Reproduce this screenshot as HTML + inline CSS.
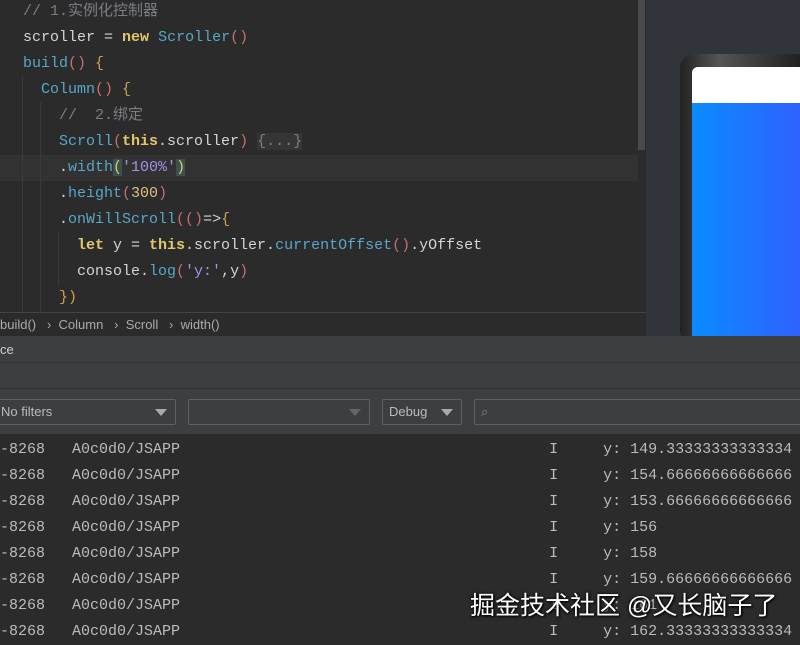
<!DOCTYPE html>
<html><head><meta charset="utf-8"><style>
*{margin:0;padding:0;box-sizing:border-box}
body{width:800px;height:642px;overflow:hidden;background:#2b2b2b;position:relative;font-family:"Liberation Mono","Noto Sans CJK SC",monospace;}
.a{position:absolute}
.code{left:0;top:0;width:646px;height:312px;background:#2b2b2b}
.ln{position:absolute;left:0;height:26px;line-height:26px;font-size:15px;white-space:pre;color:#d4d4d4}
.cm{color:#7a7e85}.kw{color:#e2c66e;font-weight:bold}.fn{color:#56a8c8}.br{color:#d0a050}.pr{color:#c86e6e}.st{color:#a98ee8}.nu{color:#e0c080}.m{color:#56a8c8}
.ui{font-family:"Liberation Sans","Noto Sans CJK SC",sans-serif}
.log{position:absolute;left:0;height:26px;line-height:26px;font-size:15px;white-space:pre;color:#bbbbbb;width:800px}
.sel{position:absolute;top:399px;height:26px;border:1px solid #5e6163;border-radius:2px;background:#3c3f41;color:#bbb;font-size:13px;line-height:24px}
.tri{position:absolute;right:8px;top:9px;width:0;height:0;border-left:6px solid transparent;border-right:6px solid transparent;border-top:7px solid #aaa}
</style></head><body>
<div class="a code"></div>
<div class="a" style="left:0;top:155px;width:638px;height:26px;background:#323232"></div>
<div class="a" style="left:638px;top:0;width:7px;height:150px;background:#4a4a4a"></div>
<div class="a" style="left:22px;top:76px;width:1px;height:236px;background:#3a3a3a"></div>
<div class="a" style="left:40px;top:102px;width:1px;height:210px;background:#3a3a3a"></div>
<div class="a" style="left:58px;top:232px;width:1px;height:54px;background:#3a3a3a"></div>
<div class="ln" style="top:-1px;left:23px"><span class="cm">// 1.实例化控制器</span></div>
<div class="ln" style="top:25px;left:23px">scroller = <span class="kw">new</span> <span class="fn">Scroller</span><span class="pr">()</span></div>
<div class="ln" style="top:51px;left:23px"><span class="fn">build</span><span class="pr">()</span> <span class="br">{</span></div>
<div class="ln" style="top:77px;left:41px"><span class="fn">Column</span><span class="pr">()</span> <span class="br">{</span></div>
<div class="ln" style="top:103px;left:59px"><span class="cm">//  2.绑定</span></div>
<div class="ln" style="top:129px;left:59px"><span class="fn">Scroll</span><span class="pr">(</span><span class="kw">this</span>.scroller<span class="pr">)</span> <span style="color:#7a7e85;background:#353535">{...}</span></div>
<div class="ln" style="top:155px;left:59px">.<span class="m">width</span><span style="background:#3b514d;color:#e2c66e">(</span><span class="st">'100%'</span><span style="background:#3b514d;color:#e2c66e">)</span></div>
<div class="ln" style="top:181px;left:59px">.<span class="m">height</span><span class="pr">(</span><span class="nu">300</span><span class="pr">)</span></div>
<div class="ln" style="top:207px;left:59px">.<span class="m">onWillScroll</span><span class="pr">(()</span>=&gt;<span class="br">{</span></div>
<div class="ln" style="top:233px;left:77px"><span class="kw">let</span> y = <span class="kw">this</span>.scroller.<span class="m">currentOffset</span><span class="pr">()</span>.yOffset</div>
<div class="ln" style="top:259px;left:77px">console.<span class="m">log</span><span class="pr">(</span><span class="st">'y:'</span>,y<span class="pr">)</span></div>
<div class="ln" style="top:285px;left:59px"><span class="br">})</span></div>
<div class="a ui" style="left:0;top:312px;width:646px;height:25px;background:#2b2b2b;border-top:1px solid #444;font-size:13px;color:#aaa;line-height:24px;white-space:pre">build()   ›  Column   ›  Scroll   ›  width()</div>
<div class="a" style="left:646px;top:0;width:154px;height:336px;background:#31343a"></div>
<div class="a" style="left:680px;top:54px;width:130px;height:290px;border-radius:14px;background:linear-gradient(90deg,#222,#555 30%,#1a1a1a)"></div>
<div class="a" style="left:692px;top:67px;width:110px;height:280px;border-radius:6px 0 0 0;background:linear-gradient(90deg,#0a8cff,#2f60ff)"></div>
<div class="a" style="left:692px;top:67px;width:110px;height:36px;border-radius:6px 0 0 0;background:#fff"></div>
<div class="a ui" style="left:0;top:336px;width:800px;height:27px;background:#3c3f41;border-bottom:1px solid #333;color:#ccc;font-size:13px;line-height:27px">ce</div>
<div class="a" style="left:0;top:363px;width:800px;height:26px;background:#3c3f41;border-bottom:1px solid #333"></div>
<div class="a" style="left:0;top:389px;width:800px;height:45px;background:#3c3f41"></div>
<div class="sel ui" style="left:-4px;width:180px;padding-left:4px">No filters<div class="tri"></div></div>
<div class="sel ui" style="left:188px;width:182px"><div class="tri" style="border-top-color:#666"></div></div>
<div class="sel ui" style="left:382px;width:80px;padding-left:6px">Debug<div class="tri"></div></div>
<div class="sel ui" style="left:474px;width:340px;color:#888;padding-left:6px">&#x2315;</div>
<div class="log" style="top:437px">-8268   A0c0d0/JSAPP                                         I     y: 149.33333333333334</div>
<div class="log" style="top:463px">-8268   A0c0d0/JSAPP                                         I     y: 154.66666666666666</div>
<div class="log" style="top:489px">-8268   A0c0d0/JSAPP                                         I     y: 153.66666666666666</div>
<div class="log" style="top:515px">-8268   A0c0d0/JSAPP                                         I     y: 156</div>
<div class="log" style="top:541px">-8268   A0c0d0/JSAPP                                         I     y: 158</div>
<div class="log" style="top:567px">-8268   A0c0d0/JSAPP                                         I     y: 159.66666666666666</div>
<div class="log" style="top:593px">-8268   A0c0d0/JSAPP                                         I     y: 161</div>
<div class="log" style="top:619px">-8268   A0c0d0/JSAPP                                         I     y: 162.33333333333334</div>
<div class="a ui" style="left:470px;top:589px;font-size:25px;color:#fff;text-shadow:0 0 3px #000,1px 1px 2px #000;white-space:nowrap;line-height:34px">掘金技术社区 @又长脑子了</div>
</body></html>
